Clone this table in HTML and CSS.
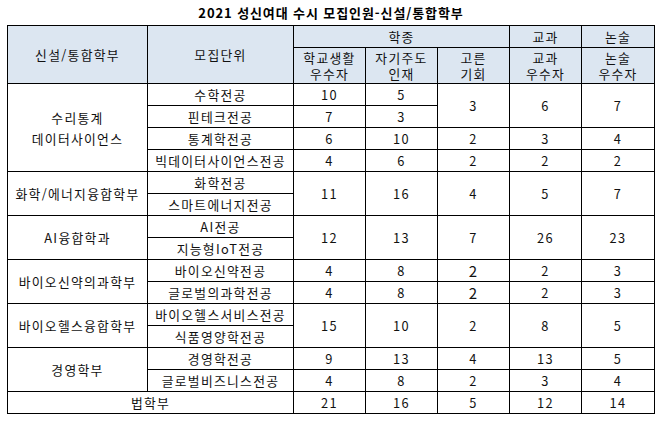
FILE: index.html
```html
<!DOCTYPE html>
<html lang="ko">
<head>
<meta charset="utf-8">
<link rel="stylesheet" href="styles.css">
</head>
<body>
<div class="sheet">
  <h1 class="title">2021 성신여대 수시 모집인원-신설/통합학부</h1>
  <table class="grid">
    <colgroup>
      <col class="c-dept"><col class="c-unit"><col class="c-num"><col class="c-num"><col class="c-num"><col class="c-num"><col class="c-last">
    </colgroup>
    <thead>
      <tr class="hr1">
        <th rowspan="2">신설/통합학부</th>
        <th rowspan="2">모집단위</th>
        <th colspan="3">학종</th>
        <th>교과</th>
        <th>논술</th>
      </tr>
      <tr class="hr2">
        <th><span class="ln">학교생활</span><span class="ln">우수자</span></th>
        <th><span class="ln">자기주도</span><span class="ln">인재</span></th>
        <th><span class="ln">고른</span><span class="ln">기회</span></th>
        <th><span class="ln">교과</span><span class="ln">우수자</span></th>
        <th><span class="ln">논술</span><span class="ln">우수자</span></th>
      </tr>
    </thead>
    <tbody>
      <tr>
        <td rowspan="4" class="tall"><span class="ln">수리통계</span><span class="ln">데이터사이언스</span></td>
        <td>수학전공</td><td>10</td><td>5</td><td rowspan="2">3</td><td rowspan="2">6</td><td rowspan="2">7</td>
      </tr>
      <tr><td>핀테크전공</td><td>7</td><td>3</td></tr>
      <tr><td>통계학전공</td><td>6</td><td>10</td><td>2</td><td>3</td><td>4</td></tr>
      <tr><td>빅데이터사이언스전공</td><td>4</td><td>6</td><td>2</td><td>2</td><td>2</td></tr>
      <tr>
        <td rowspan="2">화학/에너지융합학부</td>
        <td>화학전공</td><td rowspan="2">11</td><td rowspan="2">16</td><td rowspan="2">4</td><td rowspan="2">5</td><td rowspan="2">7</td>
      </tr>
      <tr><td>스마트에너지전공</td></tr>
      <tr>
        <td rowspan="2">AI융합학과</td>
        <td>AI전공</td><td rowspan="2">12</td><td rowspan="2">13</td><td rowspan="2">7</td><td rowspan="2">26</td><td rowspan="2">23</td>
      </tr>
      <tr><td>지능형IoT전공</td></tr>
      <tr>
        <td rowspan="2">바이오신약의과학부</td>
        <td>바이오신약전공</td><td>4</td><td>8</td><td class="big">2</td><td>2</td><td>3</td>
      </tr>
      <tr><td>글로벌의과학전공</td><td>4</td><td>8</td><td class="big">2</td><td>2</td><td>3</td></tr>
      <tr>
        <td rowspan="2">바이오헬스융합학부</td>
        <td>바이오헬스서비스전공</td><td rowspan="2">15</td><td rowspan="2">10</td><td rowspan="2">2</td><td rowspan="2">8</td><td rowspan="2">5</td>
      </tr>
      <tr><td>식품영양학전공</td></tr>
      <tr>
        <td rowspan="2">경영학부</td>
        <td>경영학전공</td><td>9</td><td>13</td><td>4</td><td>13</td><td>5</td>
      </tr>
      <tr><td>글로벌비즈니스전공</td><td>4</td><td>8</td><td>2</td><td>3</td><td>4</td></tr>
      <tr>
        <td colspan="2">법학부</td><td>21</td><td>16</td><td>5</td><td>12</td><td>14</td>
      </tr>
    </tbody>
  </table>
</div>
</body>
</html>
```

FILE: styles.css
```css
html, body {
  margin: 0;
  padding: 0;
  background: #ffffff;
}

.sheet {
  width: 648px;
  padding-left: 7px;
  font-family: "Noto Sans CJK KR", "Noto Sans", sans-serif;
  color: #111111;
}

.title {
  margin: 0;
  height: 25px;
  line-height: 25px;
  font-size: 13px;
  font-weight: bold;
  letter-spacing: 0.9px;
  text-align: center;
  color: #000000;
}

.grid {
  border-collapse: collapse;
  table-layout: fixed;
  width: 648px;
  font-size: 12.8px;
  letter-spacing: 1.3px;
}

.c-dept { width: 140px; }
.c-unit { width: 146px; }
.c-num { width: 72px; }
.c-last { width: 73px; }

.grid th,
.grid td {
  border: 1px solid #000000;
  padding: 0;
  text-align: center;
  vertical-align: middle;
  white-space: nowrap;
  overflow: hidden;
  line-height: 18px;
}

.ln {
  display: block;
  height: 16px;
  line-height: 16px;
}

.grid th {
  background: #dce6f1;
  font-weight: normal;
}

.hr1 { height: 22px; }
.hr2 { height: 36px; }

.grid tbody tr { height: 22px; }

.grid td.tall .ln {
  height: 21px;
  line-height: 21px;
}

.grid td.big { font-size: 15px; }
```
